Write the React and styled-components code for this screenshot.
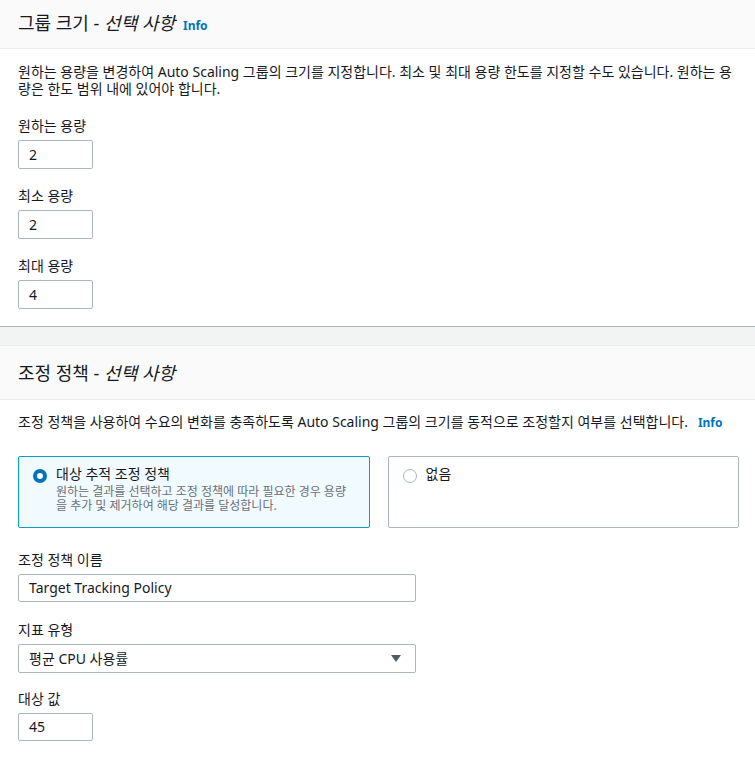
import React from 'react';
import styled, { createGlobalStyle } from 'styled-components';

const textColor = '#16191f';
const borderColor = '#aab7b8';
const lightLine = '#eaeded';
const linkBlue = '#0073bb';

const GlobalStyle = createGlobalStyle`
  body {
    margin: 0;
    background: #ffffff;
    font-family: 'Noto Sans', 'Noto Sans CJK KR', sans-serif;
    color: ${textColor};
  }
`;

const Page = styled.div`
  width: 755px;
  background: #f2f3f3;
`;

const Panel = styled.section`
  background: #ffffff;
  border-top: ${(p) => (p.first ? 'none' : `1px solid ${lightLine}`)};
  border-bottom: ${(p) => (p.first ? `1px solid ${borderColor}` : 'none')};
  margin-top: ${(p) => (p.first ? '0' : '18px')};
`;

const PanelHeader = styled.div`
  height: ${(p) => p.height}px;
  background: #fafafa;
  border-bottom: 1px solid ${lightLine};
  padding: 0 18px;
  display: flex;
  align-items: center;
  box-sizing: border-box;
`;

const Title = styled.h2`
  margin: 0;
  font-size: 18px;
  font-weight: 400;
  line-height: 22px;
  color: ${textColor};
  em {
    font-style: italic;
  }
`;

const InfoLink = styled.a`
  font-size: 12px;
  font-weight: 700;
  color: ${linkBlue};
  margin-left: ${(p) => p.gap || 6}px;
  text-decoration: none;
  font-family: 'Noto Sans', sans-serif;
`;

const PanelBody = styled.div`
  padding: ${(p) => p.pad};
  display: flex;
  flex-direction: column;
`;

const Description = styled.p`
  margin: 0;
  font-size: 14px;
  line-height: 16.5px;
`;

const Field = styled.div`
  display: flex;
  flex-direction: column;
  margin-top: ${(p) => p.top}px;
`;

const Label = styled.label`
  font-size: 14px;
  line-height: 20px;
  margin-bottom: 4px;
`;

const TextInput = styled.div`
  box-sizing: border-box;
  width: ${(p) => p.width}px;
  height: ${(p) => p.height || 29}px;
  border: 1px solid ${borderColor};
  border-radius: 2px;
  padding: 0 10px;
  font-size: 14px;
  display: flex;
  align-items: center;
  justify-content: space-between;
  background: #ffffff;
`;

const Arrow = styled.span`
  width: 0;
  height: 0;
  border-left: 5px solid transparent;
  border-right: 5px solid transparent;
  border-top: 7px solid #545b64;
  margin-right: 4px;
`;

const CardRow = styled.div`
  display: grid;
  grid-template-columns: 1fr 1fr;
  gap: 18px;
  margin-top: 24px;
`;

const Card = styled.div`
  box-sizing: border-box;
  height: 72px;
  border: 1px solid ${(p) => (p.selected ? '#00a1c9' : borderColor)};
  background: ${(p) => (p.selected ? '#f1faff' : '#ffffff')};
  border-radius: 2px;
  padding: 8px 14px;
  display: flex;
  gap: 9px;
`;

const Radio = styled.span`
  box-sizing: border-box;
  flex: none;
  width: 14px;
  height: 14px;
  margin-top: 4px;
  border-radius: 50%;
  border: ${(p) => (p.checked ? `4px solid ${linkBlue}` : `1.5px solid ${borderColor}`)};
  background: #ffffff;
`;

const CardText = styled.div`
  display: flex;
  flex-direction: column;
`;

const CardTitle = styled.div`
  font-size: 14px;
  line-height: 18px;
`;

const CardSub = styled.div`
  font-size: 12px;
  line-height: 14px;
  color: #687078;
  margin-top: 2px;
`;

const Line = styled.span`
  display: inline-block;
`;

export default function App() {
  return (
    <Page>
      <GlobalStyle />
      <Panel first>
        <PanelHeader height={49}>
          <Title>
            그룹 크기 - <em>선택 사항</em>
            <InfoLink href="#" gap={8}>Info</InfoLink>
          </Title>
        </PanelHeader>
        <PanelBody pad="15px 16px 17px 18px">
          <Description>
            원하는 용량을 변경하여 Auto Scaling 그룹의 크기를 지정합니다. 최소 및 최대 용량 한도를 지정할 수도 있습니다. 원하는 용량은 한도 범위 내에 있어야 합니다.
          </Description>
          <Field top={19}>
            <Label>원하는 용량</Label>
            <TextInput width={75}>2</TextInput>
          </Field>
          <Field top={17}>
            <Label>최소 용량</Label>
            <TextInput width={75}>2</TextInput>
          </Field>
          <Field top={17}>
            <Label>최대 용량</Label>
            <TextInput width={75}>4</TextInput>
          </Field>
        </PanelBody>
      </Panel>

      <Panel>
        <PanelHeader height={54}>
          <Title>
            조정 정책 - <em>선택 사항</em>
          </Title>
        </PanelHeader>
        <PanelBody pad="14px 16px 20px 18px">
          <Description>
            조정 정책을 사용하여 수요의 변화를 충족하도록 Auto Scaling 그룹의 크기를 동적으로 조정할지 여부를 선택합니다.
            <InfoLink href="#" gap={10}>Info</InfoLink>
          </Description>
          <CardRow>
            <Card selected>
              <Radio checked />
              <CardText>
                <CardTitle>대상 추적 조정 정책</CardTitle>
                <CardSub>
                  원하는 결과를 선택하고 조정 정책에 따라 필요한 경우 용량을 추가 및 제거하여 해당 결과를 달성합니다.
                </CardSub>
              </CardText>
            </Card>
            <Card>
              <Radio />
              <CardText>
                <CardTitle>없음</CardTitle>
              </CardText>
            </Card>
          </CardRow>
          <Field top={22}>
            <Label>조정 정책 이름</Label>
            <TextInput width={398} height={28}>Target Tracking Policy</TextInput>
          </Field>
          <Field top={18}>
            <Label>지표 유형</Label>
            <TextInput width={398} height={29}>
              <Line>평균 CPU 사용률</Line>
              <Arrow />
            </TextInput>
          </Field>
          <Field top={16}>
            <Label>대상 값</Label>
            <TextInput width={75} height={28}>45</TextInput>
          </Field>
        </PanelBody>
      </Panel>
    </Page>
  );
}
